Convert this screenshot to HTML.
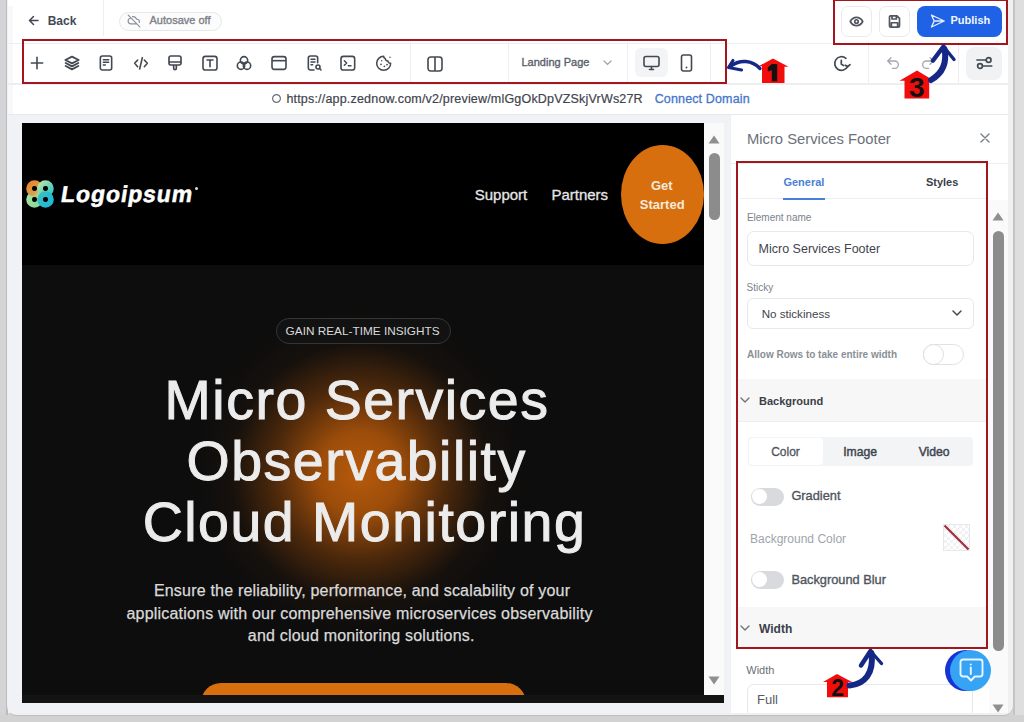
<!DOCTYPE html>
<html><head><meta charset="utf-8">
<style>
*{box-sizing:border-box;margin:0;padding:0}
html,body{width:1024px;height:722px;overflow:hidden;background:#d6d6d6;font-family:"Liberation Sans",sans-serif}
.a{position:absolute}
.t{position:absolute;line-height:1;white-space:nowrap}
svg{position:absolute;overflow:visible}
</style></head><body>
<!-- outer frame -->
<div class="a" style="left:0;top:0;width:8px;height:722px;background:#d4d4d6"></div>
<div class="a" style="left:6px;top:0;width:2px;height:722px;background:#bcbcbe"></div>
<div class="a" style="left:1013px;top:0;width:2px;height:722px;background:#c4c4c4"></div>
<div class="a" style="left:1015px;top:0;width:9px;height:722px;background:#dedede"></div>
<div class="a" style="left:0;top:715px;width:1024px;height:7px;background:#d2d2d2"></div>
<!-- card -->
<div class="a" style="left:7px;top:-10px;width:1006px;height:725px;background:#f0f0f1;border-radius:9px;overflow:hidden;box-shadow:0 1px 1px #bdbdbd"></div>
<div id="root" class="a" style="left:0;top:0;width:1024px;height:712.5px;overflow:hidden">
<div class="a" style="left:8px;top:0;width:1000px;height:115px;background:#fff"></div>
<div class="a" style="left:8px;top:6px;width:5px;height:109px;background:#f8f8f9"></div>

<!-- top bar -->
<div class="a" style="left:8px;top:43px;width:1000px;height:1px;background:#eceef1"></div>
<div class="a" style="left:103px;top:0;width:1px;height:36px;background:#eceef1"></div>
<svg style="left:28px;top:15px" width="11" height="11" viewBox="0 0 11 11"><path d="M10 5.5H1.5M5.5 1.5L1.5 5.5L5.5 9.5" fill="none" stroke="#3f4652" stroke-width="1.5" stroke-linecap="round" stroke-linejoin="round"/></svg>
<div class="t" style="left:47.7px;top:15px;font-size:12px;font-weight:bold;color:#434a55">Back</div>
<div class="a" style="left:118.5px;top:11.5px;width:103px;height:19px;border:1px solid #e5e7eb;border-radius:10px;background:#fcfcfc"></div>
<svg style="left:127px;top:14px" width="14" height="14" viewBox="0 0 24 24"><path d="M2 2l20 20M5.8 7.2A5 5 0 0 0 6 17h11M21 14.5a4 4 0 0 0-4-5.5h-.5A7 7 0 0 0 9.5 4.5" fill="none" stroke="#8a9099" stroke-width="2" stroke-linecap="round"/></svg>
<div class="t" style="left:149.5px;top:14.9px;font-size:11px;color:#7b8088;-webkit-text-stroke:0.35px #7b8088">Autosave off</div>

<!-- eye / save / publish -->
<div class="a" style="left:841px;top:5.5px;width:31px;height:31px;border:1px solid #e8eaee;border-radius:7px;background:#fff"></div>
<svg style="left:849px;top:14px" width="15" height="15" viewBox="0 0 24 24"><path d="M2 12s3.5-6.5 10-6.5 10 6.5 10 6.5-3.5 6.5-10 6.5S2 12 2 12z" fill="none" stroke="#50565f" stroke-width="2.7" stroke-linejoin="round"/><circle cx="12" cy="12" r="2.8" fill="none" stroke="#50565f" stroke-width="2.7"/></svg>
<div class="a" style="left:879px;top:5.5px;width:31px;height:31px;border:1px solid #e8eaee;border-radius:7px;background:#fff"></div>
<svg style="left:887px;top:13.5px" width="15" height="15" viewBox="0 0 24 24"><path d="M5 3h11l4 4v12a2 2 0 0 1-2 2H6a2 2 0 0 1-2-2V5a2 2 0 0 1 1-2zM8 3v5h7V3M7 21v-7h10v7" fill="none" stroke="#50565f" stroke-width="2.7" stroke-linejoin="round"/></svg>
<div class="a" style="left:917px;top:5.5px;width:85px;height:31px;border-radius:8px;background:#1f62e6"></div>
<svg style="left:929px;top:13px" width="17" height="16" viewBox="0 0 24 24"><path d="M3 3l19 9-19 9 4-9-4-9zM7 12h15" fill="none" stroke="#e8efff" stroke-width="2" stroke-linejoin="round" stroke-linecap="round"/></svg>
<div class="t" style="left:950.5px;top:14.8px;font-size:11px;font-weight:bold;color:#f2f6ff">Publish</div>

<!-- toolbar row -->
<div class="a" style="left:8px;top:83px;width:1000px;height:1.5px;background:#eceef1"></div>
<svg style="left:29px;top:55px" width="16" height="16" viewBox="0 0 24 24"><path d="M12 3.5v17M3.5 12h17" fill="none" stroke="#434951" stroke-width="2.4" stroke-linecap="round"/></svg>
<svg style="left:64px;top:55px" width="16" height="16" viewBox="0 0 24 24"><path d="M12 2.5L22 7.5 12 12.5 2 7.5z" fill="none" stroke="#434951" stroke-width="2.7" stroke-linejoin="round"/><path d="M2.5 12L12 17 21.5 12M2.5 16.5L12 21.5 21.5 16.5" fill="none" stroke="#434951" stroke-width="2.7" stroke-linejoin="round" stroke-linecap="round"/></svg>
<svg style="left:98px;top:55px" width="16" height="16" viewBox="0 0 24 24"><rect x="3.5" y="1.5" width="17" height="21" rx="3" fill="none" stroke="#434951" stroke-width="2.4"/><path d="M8 7h8M8 11h8M8 15h3" fill="none" stroke="#434951" stroke-width="2.2" stroke-linecap="round"/></svg>
<svg style="left:132.5px;top:55px" width="16" height="16" viewBox="0 0 24 24"><path d="M7 7.5L2.5 12.5 7 17.5M17 7.5L21.5 12.5 17 17.5M14 4L10 21" fill="none" stroke="#434951" stroke-width="2.4" stroke-linecap="round" stroke-linejoin="round"/></svg>
<svg style="left:167px;top:55px" width="16" height="16" viewBox="0 0 24 24"><path d="M3 4a2.5 2.5 0 0 1 2.5-2.5h13A2.5 2.5 0 0 1 21 4v8.5a2.5 2.5 0 0 1-2.5 2.5h-13A2.5 2.5 0 0 1 3 12.5zM3 10.5h18M10 15v5a2 2 0 0 0 4 0v-5" fill="none" stroke="#434951" stroke-width="2.5" stroke-linejoin="round"/></svg>
<svg style="left:201.5px;top:55px" width="16" height="16" viewBox="0 0 24 24"><rect x="1.5" y="2" width="21" height="20.5" rx="3.5" fill="none" stroke="#434951" stroke-width="2.4"/><path d="M7.5 7.5h9M12 7.5v10" fill="none" stroke="#434951" stroke-width="2.4" stroke-linecap="round"/></svg>
<svg style="left:236px;top:55px" width="16" height="16" viewBox="0 0 24 24"><circle cx="12" cy="8" r="5.5" fill="none" stroke="#434951" stroke-width="2.4"/><circle cx="7.5" cy="16" r="5.5" fill="none" stroke="#434951" stroke-width="2.4"/><circle cx="16.5" cy="16" r="5.5" fill="none" stroke="#434951" stroke-width="2.4"/></svg>
<svg style="left:270.5px;top:55px" width="16" height="16" viewBox="0 0 24 24"><rect x="1.5" y="2.5" width="21" height="19" rx="3.5" fill="none" stroke="#434951" stroke-width="2.4"/><path d="M1.5 8.5h21" fill="none" stroke="#434951" stroke-width="2.4"/></svg>
<svg style="left:305.5px;top:55px" width="16" height="16" viewBox="0 0 24 24"><path d="M12 22.5H6.5a3 3 0 0 1-3-3v-15a3 3 0 0 1 3-3h8a3 3 0 0 1 3 3v7" fill="none" stroke="#434951" stroke-width="2.4" stroke-linecap="round"/><path d="M7.5 6.5h6M7.5 10.5h6M7.5 14.5h2.5" fill="none" stroke="#434951" stroke-width="2.2" stroke-linecap="round"/><circle cx="18" cy="18" r="3" fill="none" stroke="#434951" stroke-width="2.4"/><path d="M20.2 20.2l2.3 2.3" stroke="#434951" stroke-width="2.4" stroke-linecap="round"/></svg>
<svg style="left:340px;top:55px" width="16" height="16" viewBox="0 0 24 24"><rect x="1.5" y="2" width="20.5" height="20.5" rx="3.5" fill="none" stroke="#434951" stroke-width="2.4"/><path d="M6.5 8.5l3.5 3.5-3.5 3.5M12.5 16h4" fill="none" stroke="#434951" stroke-width="2.2" stroke-linecap="round" stroke-linejoin="round"/></svg>
<svg style="left:376px;top:55px" width="16" height="16" viewBox="0 0 24 24"><path d="M11.5 2A10.5 10.5 0 1 0 22 12.5a3.5 3.5 0 0 1-4-3.5 3.5 3.5 0 0 1-4-3.5A3.5 3.5 0 0 1 11.5 2z" fill="none" stroke="#434951" stroke-width="2.3" stroke-linejoin="round"/><circle cx="7.5" cy="14" r="1.3" fill="#434951"/><circle cx="12.5" cy="17" r="1.3" fill="#434951"/><circle cx="16.5" cy="14.5" r="1.3" fill="#434951"/><circle cx="8.5" cy="8.5" r="1.1" fill="#434951"/><circle cx="21" cy="3.5" r="1.1" fill="#434951"/></svg>
<svg style="left:427px;top:55.5px" width="16" height="16" viewBox="0 0 24 24"><rect x="1.5" y="1.5" width="21" height="21" rx="4" fill="none" stroke="#434951" stroke-width="2.4"/><path d="M12 1.5v21" fill="none" stroke="#434951" stroke-width="2.4"/></svg>
<div class="a" style="left:409.5px;top:42px;width:1px;height:40px;background:#eceef1"></div>
<div class="a" style="left:507.5px;top:42px;width:1px;height:40px;background:#eceef1"></div>
<div class="t" style="left:521.5px;top:57.3px;font-size:11px;color:#5a6069;-webkit-text-stroke:0.35px #5a6069">Landing Page</div>
<svg style="left:603px;top:60px" width="9" height="6" viewBox="0 0 9 6"><path d="M1 1l3.5 3.5L8 1" fill="none" stroke="#9ca1a9" stroke-width="1.2" stroke-linecap="round"/></svg>
<div class="a" style="left:626.5px;top:42px;width:1px;height:40px;background:#eceef1"></div>
<div class="a" style="left:635px;top:48px;width:33px;height:29px;border-radius:6px;background:#f3f4f6"></div>
<svg style="left:643px;top:55px" width="17" height="16" viewBox="0 0 17 16"><rect x="1" y="1.5" width="15" height="10" rx="2" fill="none" stroke="#434951" stroke-width="1.6"/><path d="M6.5 14.5h4M8.5 11.5v3" stroke="#434951" stroke-width="1.6" stroke-linecap="round"/></svg>
<svg style="left:680px;top:54px" width="13" height="18" viewBox="0 0 13 18"><rect x="1.5" y="1" width="10" height="16" rx="2" fill="none" stroke="#434951" stroke-width="1.6"/><circle cx="6.5" cy="13.5" r="0.9" fill="#434951"/></svg>
<div class="a" style="left:710px;top:42px;width:1px;height:40px;background:#eceef1"></div>
<!-- history / undo / redo / settings -->
<svg style="left:832px;top:54px" width="19" height="19" viewBox="0 0 19 19"><path d="M13.9 4.3A6.8 6.8 0 1 0 15.7 12.4" fill="none" stroke="#434951" stroke-width="1.7" stroke-linecap="round"/><path d="M18 10.6L15.8 12.7 13.3 11.2" fill="none" stroke="#434951" stroke-width="1.7" stroke-linecap="round" stroke-linejoin="round"/><path d="M9.3 6.3v3.7l2.3 1.6" fill="none" stroke="#434951" stroke-width="1.7" stroke-linecap="round" stroke-linejoin="round"/></svg>
<div class="a" style="left:868px;top:42px;width:1px;height:42px;background:#eceef1"></div>
<svg style="left:885px;top:55px" width="16" height="16" viewBox="0 0 24 24"><path d="M9 14L4 9l5-5M4 9h10.5a5.5 5.5 0 0 1 0 11H11" fill="none" stroke="#a3a8b0" stroke-width="2" stroke-linecap="round" stroke-linejoin="round"/></svg>
<svg style="left:920px;top:55px" width="16" height="16" viewBox="0 0 24 24"><path d="M15 14l5-5-5-5M20 9H9.5a5.5 5.5 0 0 0 0 11H13" fill="none" stroke="#a3a8b0" stroke-width="2" stroke-linecap="round" stroke-linejoin="round"/></svg>
<div class="a" style="left:958px;top:42px;width:1px;height:42px;background:#eceef1"></div>
<div class="a" style="left:966px;top:47px;width:36px;height:33px;border-radius:8px;background:#f1f2f4"></div>
<svg style="left:975px;top:55px" width="18" height="16" viewBox="0 0 18 16"><path d="M2 5h9.2M7.7 11h9" stroke="#434951" stroke-width="1.7" stroke-linecap="round"/><circle cx="13.6" cy="5" r="2.4" fill="none" stroke="#434951" stroke-width="1.7"/><circle cx="5" cy="11" r="2.4" fill="none" stroke="#434951" stroke-width="1.7"/></svg>

<!-- url row -->
<svg style="left:272px;top:94px" width="9" height="9" viewBox="0 0 9 9"><circle cx="4.5" cy="4.5" r="3.9" fill="none" stroke="#6b7079" stroke-width="1.2"/></svg>
<div class="t" style="left:286.4px;top:92.5px;font-size:12.5px;letter-spacing:0.19px;color:#3f444d;-webkit-text-stroke:0.2px #3f444d">https://app.zednow.com/v2/preview/mlGgOkDpVZSkjVrWs27R</div>
<div class="t" style="left:654.7px;top:92.5px;font-size:12.5px;letter-spacing:0.14px;color:#4676c9;-webkit-text-stroke:0.3px #4676c9">Connect Domain</div>
<div class="a" style="left:8px;top:114px;width:1000px;height:1px;background:#e8e9ec"></div>

<!-- canvas area bg -->
<div class="a" style="left:8px;top:115px;width:723px;height:601px;background:#f1f2f5"></div>
<div class="a" style="left:704px;top:123px;width:20px;height:572px;background:#fafafa"></div>
<div class="a" style="left:22px;top:695px;width:702px;height:8.3px;background:#131313"></div>
<svg style="left:708px;top:135px" width="12" height="9" viewBox="0 0 12 9"><path d="M6 0.5L11.5 8.5H0.5z" fill="#8f8f8f"/></svg>
<div class="a" style="left:708.5px;top:153px;width:11px;height:67px;border-radius:6px;background:#8c8c8c"></div>
<svg style="left:708px;top:676px" width="12" height="9" viewBox="0 0 12 9"><path d="M6 8.5L11.5 0.5H0.5z" fill="#8f8f8f"/></svg>

<!-- canvas -->
<div class="a" style="left:22px;top:123px;width:682px;height:572px;background:#0d0d0d;overflow:hidden">
  <div class="a" style="left:0;top:0;width:682px;height:142px;background:#000"></div>
  <div class="a" style="left:173px;top:185px;width:330px;height:330px;background:radial-gradient(circle closest-side at center, rgba(182,90,11,1) 0%, rgba(168,82,10,0.92) 25%, rgba(130,64,10,0.55) 52%, rgba(64,34,10,0.18) 78%, rgba(15,15,15,0) 100%)"></div>
  
</div>
<!-- logo -->
<svg style="left:25px;top:179px" width="30" height="30" viewBox="0 0 30 30">
  <defs>
    <linearGradient id="g1" x1="0" y1="0" x2="1" y2="1"><stop offset="0" stop-color="#e8862a"/><stop offset="0.7" stop-color="#d9a050"/><stop offset="1" stop-color="#a8dc8c"/></linearGradient>
    <linearGradient id="g2" x1="0" y1="0" x2="1" y2="1"><stop offset="0" stop-color="#aee6a4"/><stop offset="1" stop-color="#3cc3c8"/></linearGradient>
    <linearGradient id="g3" x1="0" y1="0" x2="1" y2="1"><stop offset="0" stop-color="#9fe49c"/><stop offset="1" stop-color="#8ed69a"/></linearGradient>
    <linearGradient id="g4" x1="0" y1="0" x2="1" y2="1"><stop offset="0" stop-color="#36c0c4"/><stop offset="1" stop-color="#1eb8d8"/></linearGradient>
  </defs>
  <circle cx="9.5" cy="20.5" r="5.3" fill="none" stroke="url(#g3)" stroke-width="6"/>
  <circle cx="9.5" cy="9.5" r="5.3" fill="none" stroke="url(#g1)" stroke-width="6"/>
  <circle cx="20.5" cy="9.5" r="5.3" fill="none" stroke="url(#g2)" stroke-width="6"/>
  <circle cx="20.5" cy="20.5" r="5.3" fill="none" stroke="url(#g4)" stroke-width="6"/>
  <circle cx="9.5" cy="9.5" r="2.4" fill="#000"/><circle cx="20.5" cy="9.5" r="2.4" fill="#000"/><circle cx="9.5" cy="20.5" r="2.4" fill="#000"/><circle cx="20.5" cy="20.5" r="2.4" fill="#000"/>
</svg>
<div class="t" style="left:60px;top:182.5px;font-size:23px;font-weight:bold;letter-spacing:0.9px;color:#fff;-webkit-text-stroke:0.5px #fff;transform:skewX(-9deg);transform-origin:0 85%">Logoipsum</div>
<div class="a" style="left:194.5px;top:187px;width:3px;height:3px;border-radius:50%;background:#ddd"></div>
<div class="t" style="left:474.7px;top:187px;font-size:15px;color:#e6e6e6;-webkit-text-stroke:0.3px #e6e6e6">Support</div>
<div class="t" style="left:551.4px;top:187px;font-size:15px;color:#e6e6e6;-webkit-text-stroke:0.3px #e6e6e6">Partners</div>
<div class="a" style="left:620.5px;top:145px;width:83px;height:99px;border-radius:50%;background:#d76f0e"></div>
<div class="t" style="left:651px;top:178.5px;font-size:13px;font-weight:bold;color:#f6eadc">Get</div>
<div class="t" style="left:639.8px;top:198px;font-size:13px;font-weight:bold;color:#f6eadc">Started</div>

<div class="a" style="left:275.5px;top:317.7px;width:175px;height:26.6px;border:1.5px solid #353535;border-radius:14px;background:#121212"></div>
<div class="t" style="left:285.6px;top:325.7px;font-size:11.8px;color:#dadada">GAIN REAL-TIME INSIGHTS</div>

<div class="t" style="left:164.6px;top:373.3px;font-size:55.5px;letter-spacing:1.5px;color:#ececec;-webkit-text-stroke:1px #ececec">Micro Services</div>
<div class="t" style="left:186.5px;top:434px;font-size:55.5px;letter-spacing:1.5px;color:#ececec;-webkit-text-stroke:1px #ececec">Observability</div>
<div class="t" style="left:142.7px;top:495.3px;font-size:55.5px;letter-spacing:1.5px;color:#ececec;-webkit-text-stroke:1px #ececec">Cloud Monitoring</div>

<div class="t" style="left:153.9px;top:582.5px;font-size:16px;letter-spacing:0.2px;color:#dadada;-webkit-text-stroke:0.25px #dadada">Ensure the reliability, performance, and scalability of your</div>
<div class="t" style="left:126.5px;top:605.5px;font-size:16px;letter-spacing:0.2px;color:#dadada;-webkit-text-stroke:0.25px #dadada">applications with our comprehensive microservices observability</div>
<div class="t" style="left:247.8px;top:628.4px;font-size:16px;letter-spacing:0.2px;color:#dadada;-webkit-text-stroke:0.25px #dadada">and cloud monitoring solutions.</div>
<div class="a" style="left:201px;top:682.6px;width:325px;height:40px;border-radius:20px;background:#d76f0e;clip-path:inset(0 0 27.7px 0)"></div>

<!-- right panel -->
<div class="a" style="left:729.5px;top:115px;width:278.5px;height:601px;background:#fff;border-left:1px solid #eef0f3"></div>
<div class="t" style="left:746.9px;top:131.7px;font-size:14.8px;color:#6b7079">Micro Services Footer</div>
<svg style="left:980px;top:133px" width="10" height="10" viewBox="0 0 10 10"><path d="M1 1l8 8M9 1l-8 8" stroke="#7a7f88" stroke-width="1.4" stroke-linecap="round"/></svg>
<div class="a" style="left:731px;top:163px;width:277px;height:1px;background:#eceef1"></div>
<div class="t" style="left:783.4px;top:177.3px;font-size:11px;font-weight:bold;color:#4a7fd6">General</div>
<div class="t" style="left:925.9px;top:177.2px;font-size:11px;font-weight:bold;color:#3a3f48">Styles</div>
<div class="a" style="left:740px;top:198px;width:248px;height:1px;background:#eceef1"></div>
<div class="a" style="left:783px;top:197.8px;width:42px;height:2px;background:#4a7fd6"></div>

<div class="t" style="left:746.9px;top:213.4px;font-size:10px;color:#7d828a">Element name</div>
<div class="a" style="left:747px;top:231px;width:226.5px;height:34.5px;border:1px solid #e6e8eb;border-radius:7px;background:#fff"></div>
<div class="t" style="left:758.6px;top:242.6px;font-size:12.5px;color:#3f444d">Micro Services Footer</div>
<div class="t" style="left:746.6px;top:282.5px;font-size:10px;color:#7d828a">Sticky</div>
<div class="a" style="left:747px;top:297.5px;width:226.5px;height:31.5px;border:1px solid #e6e8eb;border-radius:6px;background:#fff"></div>
<div class="t" style="left:761.7px;top:307.8px;font-size:11.6px;color:#3f444d">No stickiness</div>
<svg style="left:952px;top:310px" width="10" height="7" viewBox="0 0 10 7"><path d="M1 1l4 4 4-4" fill="none" stroke="#434951" stroke-width="1.5" stroke-linecap="round" stroke-linejoin="round"/></svg>
<div class="t" style="left:747px;top:350px;font-size:10px;font-weight:bold;color:#8a8f97">Allow Rows to take entire width</div>
<div class="a" style="left:922.5px;top:343.5px;width:41px;height:21px;border:1.5px solid #e0e1e4;border-radius:11px;background:#fff"></div>
<div class="a" style="left:922.5px;top:343.5px;width:21px;height:21px;border:1.5px solid #dcdee1;border-radius:50%;background:#fff"></div>

<div class="a" style="left:737px;top:379px;width:250px;height:43px;background:#f7f7f8;border-bottom:1px solid #eceef1"></div>
<svg style="left:740px;top:397px" width="10" height="7" viewBox="0 0 10 7"><path d="M1 1l4 4 4-4" fill="none" stroke="#6b7079" stroke-width="1.3" stroke-linecap="round" stroke-linejoin="round"/></svg>
<div class="t" style="left:759px;top:396.4px;font-size:11px;font-weight:bold;color:#3a3f48">Background</div>

<div class="a" style="left:748px;top:436.8px;width:224.6px;height:29.5px;border-radius:4px;background:#f3f4f6"></div>
<div class="a" style="left:749px;top:438px;width:74px;height:27px;border-radius:4px;background:#fff"></div>
<div class="t" style="left:771.2px;top:446px;font-size:12px;color:#4f555e;-webkit-text-stroke:0.3px #4f555e">Color</div>
<div class="t" style="left:843.2px;top:445.7px;font-size:12.2px;color:#3f4550;-webkit-text-stroke:0.45px #3f4550">Image</div>
<div class="t" style="left:918.7px;top:445.7px;font-size:12.2px;color:#3f4550;-webkit-text-stroke:0.45px #3f4550">Video</div>

<div class="a" style="left:750.5px;top:487.8px;width:33px;height:18px;border-radius:9px;background:#d9dadd"></div>
<div class="a" style="left:752px;top:489.3px;width:15px;height:15px;border-radius:50%;background:#fff"></div>
<div class="t" style="left:791.4px;top:489.8px;font-size:12.8px;color:#4f555e;-webkit-text-stroke:0.35px #4f555e">Gradient</div>

<div class="t" style="left:750px;top:532.8px;font-size:12px;color:#a0a5ad">Background Color</div>
<div class="a" style="left:943.3px;top:524px;width:27px;height:27px;border:1px solid #e6e8eb;background-color:#fff;background-image:linear-gradient(45deg,#f2f2f4 25%,transparent 25%,transparent 75%,#f2f2f4 75%),linear-gradient(45deg,#f2f2f4 25%,transparent 25%,transparent 75%,#f2f2f4 75%);background-size:6px 6px;background-position:0 0,3px 3px"></div>
<svg style="left:943.3px;top:524px" width="27" height="27" viewBox="0 0 27 27"><path d="M1.5 1.5L25.5 25.5" stroke="#9e3340" stroke-width="2.3"/></svg>

<div class="a" style="left:750.5px;top:570.6px;width:33px;height:18px;border-radius:9px;background:#d9dadd"></div>
<div class="a" style="left:752px;top:572.1px;width:15px;height:15px;border-radius:50%;background:#fff"></div>
<div class="t" style="left:791.4px;top:573.5px;font-size:12.8px;color:#4f555e;-webkit-text-stroke:0.35px #4f555e">Background Blur</div>

<div class="a" style="left:737px;top:607px;width:250px;height:40px;background:#f7f7f8"></div>
<svg style="left:740px;top:625px" width="10" height="7" viewBox="0 0 10 7"><path d="M1 1l4 4 4-4" fill="none" stroke="#6b7079" stroke-width="1.3" stroke-linecap="round" stroke-linejoin="round"/></svg>
<div class="t" style="left:759px;top:622.6px;font-size:12px;font-weight:bold;color:#3a3f48">Width</div>

<div class="t" style="left:746.3px;top:665.1px;font-size:11px;color:#6b7079">Width</div>
<div class="a" style="left:747px;top:683.7px;width:226px;height:40px;border:1px solid #e6e8eb;border-radius:7px;background:#fff"></div>
<div class="t" style="left:757px;top:693px;font-size:13px;color:#555b65">Full</div>

<!-- panel scrollbar -->
<div class="a" style="left:989px;top:200px;width:19px;height:516px;background:#fafafa"></div>
<svg style="left:992px;top:211.5px" width="12" height="9" viewBox="0 0 12 9"><path d="M6 0.5L11.5 8.5H0.5z" fill="#8f8f8f"/></svg>
<div class="a" style="left:992.5px;top:230.6px;width:11px;height:420px;border-radius:6px;background:#8c8c8c"></div>
<svg style="left:991.5px;top:704px" width="12" height="9" viewBox="0 0 12 9"><path d="M6 8.5L11.5 0.5H0.5z" fill="#8f8f8f"/></svg>

<!-- chat bubble -->
<div class="a" style="left:944.7px;top:649.6px;width:41px;height:41px;border-radius:50%;background:#1633d6"></div>
<div class="a" style="left:950px;top:649.6px;width:41px;height:41px;border-radius:50%;background:#36a3f4"></div>
<svg style="left:956px;top:655px" width="30" height="30" viewBox="0 0 30 30"><path d="M7 4.5h17a2.5 2.5 0 0 1 2.5 2.5v12a2.5 2.5 0 0 1-2.5 2.5h-5.2L15 25.5l-3.8-4H7A2.5 2.5 0 0 1 4.5 19V7A2.5 2.5 0 0 1 7 4.5z" fill="none" stroke="#eaf6ff" stroke-width="1.9" stroke-linejoin="round"/><path d="M14.8 12.5v6.5" stroke="#eaf6ff" stroke-width="1.9" stroke-linecap="round"/><circle cx="14.8" cy="9.5" r="1" fill="#eaf6ff"/></svg>

<!-- annotations: red boxes -->
<div class="a" style="left:22px;top:39px;width:705px;height:45px;border:2.8px solid #a3161d"></div>
<div class="a" style="left:833px;top:-1px;width:175px;height:46px;border:2.8px solid #a3161d"></div>
<div class="a" style="left:736px;top:161.3px;width:251.5px;height:487.5px;border:2.7px solid #a3161d"></div>

<!-- annotations: houses and arrows -->
<svg style="left:0;top:0" width="1024" height="722" viewBox="0 0 1024 722">
  <g>
    <path d="M773 58.5 L758.5 66.3 L762 66.3 L762 83 L784.5 83 L784.5 66.8 L788.5 66.8 Z" fill="#f20d0d"/>
    <path d="M771.8 64 L777.2 64 L777.2 81.2 L771.8 81.2 L771.8 70.2 L767.8 71.6 L767.8 67.4 Z" fill="#141010"/>
    <path d="M760 68.5 C752 60 740 59 730 66.5" fill="none" stroke="#152886" stroke-width="3.4" stroke-linecap="round"/>
    <path d="M733 60.5 L728.5 67.5 L741.5 70" fill="none" stroke="#152886" stroke-width="3.2" stroke-linecap="round" stroke-linejoin="round"/>
  </g>
  <g>
    <path d="M917 70.5 L899.5 80.8 L904.5 80.8 L904.5 98.5 L929.2 98.5 L929.2 80.8 L934 80.8 Z" fill="#f20d0d"/>
    <text x="916.8" y="97.3" style="font-family:'Liberation Sans';font-weight:bold" font-size="28" text-anchor="middle" fill="#141010">3</text>
    <path d="M931 80 C943 73 947 62 944.5 49" fill="none" stroke="#152886" stroke-width="6" stroke-linecap="round"/>
    <path d="M933 60.5 L943.5 46.5" fill="none" stroke="#152886" stroke-width="4.5" stroke-linecap="round"/><path d="M943.5 46.5 L954 59.5" fill="none" stroke="#152886" stroke-width="3.4" stroke-linecap="round"/>
  </g>
  <g>
    <path d="M837 674 L823 682 L827 682 L827 697.2 L848 697.2 L848 682 L852 682 Z" fill="#f20d0d"/>
    <text x="837.7" y="696" style="font-family:'Liberation Sans';font-weight:bold" font-size="23" text-anchor="middle" fill="#141010">2</text>
    <path d="M849.5 685.5 C865 684 874 673 871.5 653" fill="none" stroke="#152886" stroke-width="6" stroke-linecap="round"/>
    <path d="M861 665.5 L870.5 651" fill="none" stroke="#152886" stroke-width="4.5" stroke-linecap="round"/><path d="M870.5 651 L881.5 663.5" fill="none" stroke="#152886" stroke-width="3.4" stroke-linecap="round"/>
  </g>
</svg>
</div>
</body></html>
